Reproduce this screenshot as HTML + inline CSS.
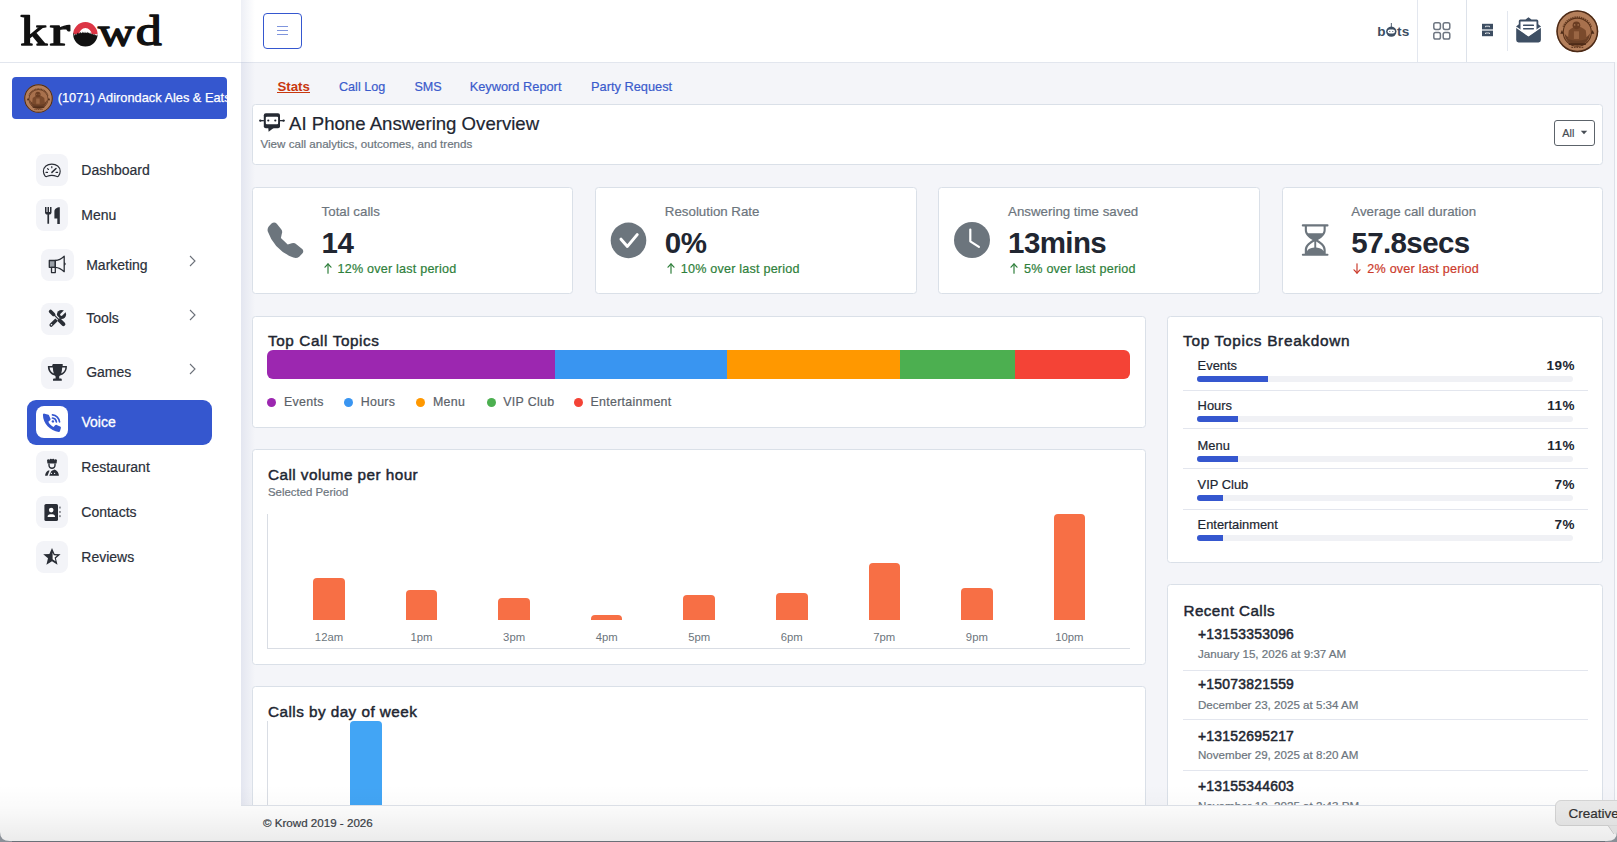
<!DOCTYPE html><html><head><meta charset="utf-8"><style>
html,body{margin:0;padding:0;width:1617px;height:842px;overflow:hidden;background:#f4f5f9;font-family:"Liberation Sans",sans-serif;}
.t{position:absolute;line-height:1;white-space:nowrap;}
svg{display:block}
</style></head><body>
<div style="position:absolute;left:241px;top:0px;width:1376px;height:842px;background:#f4f5f9"></div>
<div style="position:absolute;left:241px;top:0px;width:1376px;height:62px;background:#fff"></div>
<div style="position:absolute;left:241px;top:62px;width:1376px;height:1px;background:#e2e6ee"></div>
<div style="position:absolute;left:241px;top:0px;width:14px;height:842px;background:linear-gradient(to right, rgba(60,80,150,0.09), rgba(60,80,150,0))"></div>
<div style="position:absolute;left:263px;top:13px;width:39px;height:36px;border:1px solid #3557cf;border-radius:4px;box-sizing:border-box"></div>
<div style="position:absolute;left:277px;top:26px;width:11px;height:1.3px;background:#7f95dd"></div>
<div style="position:absolute;left:277px;top:30px;width:11px;height:1.3px;background:#7f95dd"></div>
<div style="position:absolute;left:277px;top:34px;width:11px;height:1.3px;background:#7f95dd"></div>
<svg style="position:absolute;left:1370px;top:15px" width="45" height="30" viewBox="1370 15 45 30">
<g fill="#3d4e62" font-family="Liberation Sans" font-weight="700">
<text x="1377.3" y="36.2" font-size="13.6">b</text>
<text x="1397" y="36.2" font-size="13.6" letter-spacing="0.2">ts</text>
<circle cx="1391.3" cy="31.6" r="5.2"/>
<rect x="1390.85" y="23" width="0.9" height="4"/>
</g>
<rect x="1387.6" y="29.4" width="7.4" height="4.2" rx="2.1" fill="#fff"/>
<circle cx="1389.8" cy="31.5" r="0.6" fill="#3d4e62"/><circle cx="1392.8" cy="31.5" r="0.6" fill="#3d4e62"/>
</svg>
<div style="position:absolute;left:1417px;top:0px;width:1px;height:62px;background:#e3e7ef"></div>
<svg style="position:absolute;left:1432px;top:21px" width="20" height="20" viewBox="0 0 20 20"><g fill="none" stroke="#6e7681" stroke-width="1.5">
<rect x="1.8" y="1.8" width="6.6" height="6.6" rx="1.8"/><rect x="11.2" y="1.8" width="6.6" height="6.6" rx="1.8"/>
<rect x="1.8" y="11.4" width="6.6" height="6.6" rx="1.8"/><rect x="11.2" y="11.4" width="6.6" height="6.6" rx="1.8"/></g></svg>
<div style="position:absolute;left:1466px;top:0px;width:1px;height:62px;background:#dde2ea"></div>
<svg style="position:absolute;left:1481px;top:23px" width="13" height="15" viewBox="0 0 13 15"><g fill="#3d4e62"><rect x="1" y="0.8" width="11" height="5.6"/><rect x="1" y="7.6" width="11" height="5.6"/></g>
<g stroke="#fff" stroke-width="0.8" fill="none"><path d="M4.5 4.2V3.2h4v1"/><path d="M4.5 11V10h4v1"/></g></svg>
<div style="position:absolute;left:1507px;top:11px;width:1px;height:40px;background:#e3e7ef"></div>
<svg style="position:absolute;left:1514px;top:16px" width="29" height="29" viewBox="0 0 29 29"><path fill="#3e4f64" d="M14.5 1.2l3 2.2h5.2a1.6 1.6 0 0 1 1.6 1.6v3.2l2.6 2.2v13.6a2.4 2.4 0 0 1-2.4 2.4H4.6a2.4 2.4 0 0 1-2.4-2.4V10.4l2.6-2.2V5a1.6 1.6 0 0 1 1.6-1.6h5.1z"/>
<path fill="#fff" d="M6.5 5.5h16v9l-8 5.5-8-5.5z"/>
<path fill="none" stroke="#fff" stroke-width="1.3" d="M2.2 11.2l12.3 8.5 12.3-8.5"/>
<g fill="#3e4f64"><rect x="9" y="8.6" width="11" height="1.4" rx="0.6"/><rect x="9" y="12" width="11" height="1.4" rx="0.6"/></g></svg>
<svg style="position:absolute;left:1556.2px;top:10.099999999999998px" width="42.6" height="42.6" viewBox="0 0 100 100">
<circle cx="50" cy="50" r="49" fill="#b47f5b"/>
<circle cx="50" cy="50" r="47.5" fill="none" stroke="#4b2a17" stroke-width="3.5"/>
<path d="M18 40 A34 34 0 0 1 82 40" fill="none" stroke="#6b4027" stroke-width="6" stroke-dasharray="3 2"/>
<circle cx="50" cy="52" r="33" fill="#a8714d" stroke="#5a3219" stroke-width="2.5"/>
<path d="M20 55 Q22 80 50 84 Q78 80 80 55 Q70 70 50 70 Q30 70 20 55z" fill="#5e3620" opacity="0.85"/>
<path d="M30 48 Q50 30 70 48 L72 68 Q50 76 28 68z" fill="#7a4a2c"/>
<circle cx="48" cy="36" r="9" fill="#6a3d22"/>
<circle cx="44" cy="35" r="1.5" fill="#c8946e"/><circle cx="52" cy="35" r="1.5" fill="#c8946e"/>
<rect x="42" y="50" width="12" height="18" fill="#9a6644"/>
<path d="M30 80 h40" stroke="#4b2a17" stroke-width="4"/>
<path d="M36 88 h28" stroke="#6b4027" stroke-width="3" stroke-dasharray="4 2"/>
<path d="M10 56 l4 -9 4 9z M82 56 l4 -9 4 9z" fill="#4b2a17"/>
</svg>
<div style="position:absolute;left:0px;top:0px;width:241px;height:842px;background:#fff"></div>
<div style="position:absolute;left:0px;top:62px;width:241px;height:1px;background:#e2e6ee"></div>
<svg style="position:absolute;left:0;top:0" width="241" height="62" viewBox="0 0 241 62">
<g font-family="Liberation Serif" font-size="43" fill="#111" stroke="#111" stroke-width="1.3" stroke-linejoin="round">
<text x="20.2" y="45.2" textLength="27" lengthAdjust="spacingAndGlyphs">k</text>
<text x="49.6" y="45.2" textLength="20.6" lengthAdjust="spacingAndGlyphs">r</text>
<text x="98" y="45.8" textLength="36.5" lengthAdjust="spacingAndGlyphs">w</text>
<text x="135.8" y="45.2" textLength="26" lengthAdjust="spacingAndGlyphs">d</text>
</g>
<path d="M73.2 34.300a12.200 12.200 0 0 1 24.400 0h-6a6.200 6.200 0 0 0-12.400 0z" fill="#dc3545"/>
<path d="M73.2 34.3L73.9 32.4 74.6 35.8 75.4 33.7 76.0 34.7 76.9 34.1 77.4 32.4 78.1 33.8 79.0 33.0 79.5 33.6 80.3 31.8 81.0 33.2 81.7 32.9 82.2 31.6 82.8 32.9 83.7 32.2 84.3 33.3 85.0 31.4 85.6 33.0 86.4 32.4 87.1 33.2 87.7 31.8 88.3 33.1 89.0 32.6 89.6 33.7 90.2 32.2 90.7 33.9 91.3 33.6 92.0 34.5 92.8 33.7 93.5 34.8 94.4 34.0 95.0 35.4 95.8 34.8 96.5 35.8 97.6 34.3A12.2 12.2 0 0 1 73.2 34.3z" fill="#111"/>
</svg>
<div style="position:absolute;left:12px;top:77px;width:215px;height:42px;background:#3557cf;border-radius:4px"></div>
<svg style="position:absolute;left:24.0px;top:84.0px" width="29.0" height="29.0" viewBox="0 0 100 100">
<circle cx="50" cy="50" r="49" fill="#b47f5b"/>
<circle cx="50" cy="50" r="47.5" fill="none" stroke="#4b2a17" stroke-width="3.5"/>
<path d="M18 40 A34 34 0 0 1 82 40" fill="none" stroke="#6b4027" stroke-width="6" stroke-dasharray="3 2"/>
<circle cx="50" cy="52" r="33" fill="#a8714d" stroke="#5a3219" stroke-width="2.5"/>
<path d="M20 55 Q22 80 50 84 Q78 80 80 55 Q70 70 50 70 Q30 70 20 55z" fill="#5e3620" opacity="0.85"/>
<path d="M30 48 Q50 30 70 48 L72 68 Q50 76 28 68z" fill="#7a4a2c"/>
<circle cx="48" cy="36" r="9" fill="#6a3d22"/>
<circle cx="44" cy="35" r="1.5" fill="#c8946e"/><circle cx="52" cy="35" r="1.5" fill="#c8946e"/>
<rect x="42" y="50" width="12" height="18" fill="#9a6644"/>
<path d="M30 80 h40" stroke="#4b2a17" stroke-width="4"/>
<path d="M36 88 h28" stroke="#6b4027" stroke-width="3" stroke-dasharray="4 2"/>
<path d="M10 56 l4 -9 4 9z M82 56 l4 -9 4 9z" fill="#4b2a17"/>
</svg>
<div style="position:absolute;left:12px;top:77px;width:215px;height:42px;overflow:hidden">
<div class="t" style="left:45.70px;top:14.66px;font-size:12.8px;font-weight:400;color:#fff;-webkit-text-stroke:0.25px #fff;">(1071) Adirondack Ales &amp; Eats</div>
</div>
<div style="position:absolute;left:36px;top:154px;width:32px;height:32px;background:#f3f4f8;border-radius:8px"></div>
<svg style="position:absolute;left:36px;top:154px" width="32" height="32" viewBox="0 0 32 32"><g fill="none" stroke="#2a2e36" stroke-width="1.15" stroke-linecap="round">
<path d="M9 21.8C7.9 20.4 7.4 18.8 7.4 17.2C7.4 12.8 11.2 10.1 15.8 10.1S24.2 12.8 24.2 17.2C24.2 18.8 23.7 20.4 22.6 21.8C22 22.6 21.1 22.7 20.3 22.3C18.9 21.6 17.4 21.3 15.8 21.3S12.7 21.6 11.3 22.3C10.5 22.7 9.6 22.6 9 21.8z"/>
<path d="M10 18.4h1.5M20.1 18.4h1.5M11.5 14.6l1 .9M15.8 12.6v1.1"/>
<path d="M15.9 18.4l4.1-3.9" stroke-width="1.5"/></g></svg>
<div class="t" style="left:81.30px;top:163.35px;font-size:14px;font-weight:400;color:#2b303a;-webkit-text-stroke:0.2px #2b303a;">Dashboard</div>
<div style="position:absolute;left:36px;top:199px;width:32px;height:32px;background:#f3f4f8;border-radius:8px"></div>
<svg style="position:absolute;left:36px;top:199px" width="32" height="32" viewBox="0 0 32 32"><g fill="#2a2e36">
<path d="M9 8h1.5v5h1V8h1.5v5h1V8h1.5v5.5c0 1.2-1 2-2.4 2.1v9.1h-1.7v-9.1C10 15.5 9 14.7 9 13.5z"/>
<path d="M23.8 8.2v16.7h-2.5v-5.3h-2.9v-7.3c0-2.4 2.3-4.1 5.4-4.1z"/></g></svg>
<div class="t" style="left:81.30px;top:208.35px;font-size:14px;font-weight:400;color:#2b303a;-webkit-text-stroke:0.2px #2b303a;">Menu</div>
<div style="position:absolute;left:41px;top:248.5px;width:33px;height:32.5px;background:#f3f4f8;border-radius:8px"></div>
<svg style="position:absolute;left:41px;top:249px" width="33" height="32" viewBox="0 0 33 32"><g stroke="#2a2e36" stroke-width="1.3" stroke-linejoin="round">
<rect x="8.3" y="11.5" width="6" height="6.8" fill="#9aa0a8"/>
<rect x="10.5" y="18.3" width="3.8" height="5.3" fill="none"/>
<path d="M14.3 11.5c3.3-.2 6-1.5 8.9-4.3v15.5c-2.9-2.8-5.6-4.1-8.9-4.3z" fill="none"/></g>
<path d="M23.2 13.3c.9.3 1.5.9 1.5 1.6s-.6 1.3-1.5 1.6z" fill="#2a2e36"/></svg>
<div class="t" style="left:86.20px;top:257.85px;font-size:14px;font-weight:400;color:#2b303a;-webkit-text-stroke:0.2px #2b303a;">Marketing</div>
<div style="position:absolute;left:41px;top:303px;width:33px;height:32px;background:#f3f4f8;border-radius:8px"></div>
<svg style="position:absolute;left:41px;top:303px" width="33" height="32" viewBox="0 0 33 32"><g stroke-linecap="round">
<path d="M10.2 22.1L18.6 13.7" stroke="#2a2e36" stroke-width="3.5"/>
<circle cx="20.5" cy="11.5" r="4.6" fill="#2a2e36"/>
<path d="M20.4 11.6L25.2 6.8" stroke="#f3f4f8" stroke-width="2.6"/>
<circle cx="10.5" cy="21.8" r="0.8" fill="#f3f4f8"/>
<path d="M13.2 12L17.6 16.4" stroke="#f3f4f8" stroke-width="3.2"/>
<path d="M9.6 8.4L12.6 11.4" stroke="#2a2e36" stroke-width="3.6"/>
<path d="M12.6 11.4L17.8 16.6" stroke="#2a2e36" stroke-width="1.3" stroke-linecap="butt"/>
<path d="M18.6 17.4L22.4 21.2" stroke="#2a2e36" stroke-width="4"/>
</g></svg>
<div class="t" style="left:86.20px;top:311.35px;font-size:14px;font-weight:400;color:#2b303a;-webkit-text-stroke:0.2px #2b303a;">Tools</div>
<div style="position:absolute;left:41px;top:357px;width:33px;height:32px;background:#f3f4f8;border-radius:8px"></div>
<svg style="position:absolute;left:41px;top:357px" width="33" height="32" viewBox="0 0 33 32"><g fill="#2a2e36">
<path d="M11.8 7.1h9.9v1.8h4.2v1.1c0 4.3-3 7.6-6.8 8.6-.5.2-.9.6-.9 1.1v1.9h1.3c.8 0 1.3.5 1.3 1.2v.9h-8.8v-.9c0-.7.5-1.2 1.3-1.2h1.3v-1.9c0-.5-.4-.9-.9-1.1-3.8-1-6.8-4.3-6.8-8.6V8.9h4.2z"/></g>
<path d="M8.6 10.5c.2 2.7 1.9 5 4.2 6.1-.5-1.8-.9-3.9-1-6.1z M24.4 10.5c-.2 2.7-1.9 5-4.2 6.1.5-1.8.9-3.9 1-6.1z" fill="#f3f4f8"/></svg>
<div class="t" style="left:86.20px;top:365.35px;font-size:14px;font-weight:400;color:#2b303a;-webkit-text-stroke:0.2px #2b303a;">Games</div>
<svg style="position:absolute;left:187px;top:254px" width="10" height="14" viewBox="0 0 10 14"><path d="M3 2l5 5-5 5" fill="none" stroke="#6b7079" stroke-width="1.1"/></svg>
<svg style="position:absolute;left:187px;top:308px" width="10" height="14" viewBox="0 0 10 14"><path d="M3 2l5 5-5 5" fill="none" stroke="#6b7079" stroke-width="1.1"/></svg>
<svg style="position:absolute;left:187px;top:362px" width="10" height="14" viewBox="0 0 10 14"><path d="M3 2l5 5-5 5" fill="none" stroke="#6b7079" stroke-width="1.1"/></svg>
<div style="position:absolute;left:27px;top:400px;width:185px;height:45px;background:#3557cf;border-radius:9px"></div>
<div style="position:absolute;left:36px;top:406px;width:32px;height:32px;background:#fff;border-radius:8px"></div>
<svg style="position:absolute;left:36px;top:406px" width="32" height="32" viewBox="0 0 32 32"><g fill="#3557cf">
<g transform="translate(0.6,0.7) scale(0.93)"><path d="M11.6 8.4c.7-.2 1.4.1 1.7.8l1.6 3.7c.3.6.1 1.3-.4 1.7l-1.9 1.6c1.2 2.5 3.2 4.5 5.7 5.7l1.6-1.9c.4-.5 1.1-.7 1.7-.4l3.7 1.6c.7.3 1 1 .8 1.7l-.9 3.2c-.2.6-.7 1-1.3 1C14.600 25.900 6.8 18.1 6.8 8.6c0-.6.4-1.1 1-1.3z"/></g>
<circle cx="16.9" cy="15.4" r="1.2"/></g>
<g fill="none" stroke="#3557cf" stroke-width="1.7" stroke-linecap="round">
<path d="M16.5 12c2 .2 3.6 1.8 3.9 3.8"/><path d="M16.5 8.9c3.7.2 6.7 3.2 7 6.9"/></g></svg>
<div class="t" style="left:81.50px;top:414.95px;font-size:14px;font-weight:400;color:#fff;-webkit-text-stroke:0.3px #fff;">Voice</div>
<div style="position:absolute;left:36px;top:451px;width:32px;height:32px;background:#f3f4f8;border-radius:8px"></div>
<svg style="position:absolute;left:36px;top:451px" width="32" height="32" viewBox="0 0 32 32"><g fill="#2a2e36">
<rect x="11.3" y="9.2" width="9.4" height="3.3" rx="0.4"/><circle cx="12.4" cy="9.4" r="1.25"/><circle cx="14.8" cy="9.1" r="1.25"/><circle cx="17.2" cy="9.1" r="1.25"/><circle cx="19.6" cy="9.4" r="1.25"/>
<path d="M12.3 12.5h1.4v1.7c0 1.3 1 2.3 2.3 2.3s2.3-1 2.3-2.3v-1.7h1.4v1.7c0 2.1-1.7 3.7-3.7 3.7s-3.7-1.6-3.7-3.7z"/>
<path d="M9.1 24.8c0-2.3 1.2-4.4 3-5.4l1.5.1-2.1 5.3z"/>
<path d="M13.2 24.8l2-4.6c.6-.6 1.2-.9 2-1l1-.7 1.4.4c1.9 1 3.3 3.100 3.3 5.900z"/></g>
<circle cx="15.4" cy="22.4" r="0.6" fill="#f3f4f8"/><circle cx="18.6" cy="22.4" r="0.6" fill="#f3f4f8"/></svg>
<div class="t" style="left:81.30px;top:460.35px;font-size:14px;font-weight:400;color:#2b303a;-webkit-text-stroke:0.2px #2b303a;">Restaurant</div>
<div style="position:absolute;left:36px;top:496px;width:32px;height:32px;background:#f3f4f8;border-radius:8px"></div>
<svg style="position:absolute;left:36px;top:496px" width="32" height="32" viewBox="0 0 32 32"><rect x="8.4" y="8" width="13.6" height="17.1" rx="1.6" fill="#2a2e36"/>
<g fill="#8d9096"><rect x="23" y="10.6" width="1.9" height="1.9"/><rect x="23" y="15" width="1.9" height="1.9"/><rect x="23" y="19.2" width="1.9" height="1.9"/></g>
<circle cx="15.2" cy="14.1" r="2.3" fill="#fff"/><path d="M11.6 20.9c0-1.6 1-2.6 2.6-2.6h2.2c1.6 0 2.6 1 2.6 2.600z" fill="#fff"/></svg>
<div class="t" style="left:81.30px;top:505.35px;font-size:14px;font-weight:400;color:#2b303a;-webkit-text-stroke:0.2px #2b303a;">Contacts</div>
<div style="position:absolute;left:36px;top:541px;width:32px;height:32px;background:#f3f4f8;border-radius:8px"></div>
<svg style="position:absolute;left:36px;top:541px" width="32" height="32" viewBox="0 0 32 32"><path d="M16 7l2.6 6 6 .2-4.7 4 1.6 6.600-5.500-3.600-5.600 3.600 1.600-6.600-4.800-4 6.200-.200z" fill="#2a2e36"/>
<path d="M16.600 11.600l1.200 2.700 3.300.100-2.500 2.100.900 3.700-2.900-1.900z" fill="#fff"/></svg>
<div class="t" style="left:81.30px;top:550.35px;font-size:14px;font-weight:400;color:#2b303a;-webkit-text-stroke:0.2px #2b303a;">Reviews</div>
<div class="t" style="left:277.40px;top:79.54px;font-size:13.3px;font-weight:700;color:#c8380f;">Stats</div>
<div style="position:absolute;left:277.4px;top:92px;width:32.2px;height:1.2px;background:#c8380f"></div>
<div class="t" style="left:339.00px;top:81.13px;font-size:12.6px;font-weight:400;color:#3a5bcc;-webkit-text-stroke:0.2px #3a5bcc;">Call Log</div>
<div class="t" style="left:414.40px;top:81.13px;font-size:12.6px;font-weight:400;color:#3a5bcc;-webkit-text-stroke:0.2px #3a5bcc;">SMS</div>
<div class="t" style="left:469.70px;top:80.96px;font-size:12.8px;font-weight:400;color:#3a5bcc;-webkit-text-stroke:0.2px #3a5bcc;">Keyword Report</div>
<div class="t" style="left:591.00px;top:80.96px;font-size:12.8px;font-weight:400;color:#3a5bcc;-webkit-text-stroke:0.2px #3a5bcc;">Party Request</div>
<div style="position:absolute;left:252px;top:104px;width:1351px;height:61px;background:#fff;border:1px solid #dae0e8;border-radius:3.5px;box-sizing:border-box;"></div>
<svg style="position:absolute;left:258px;top:110px" width="28" height="24" viewBox="0 0 28 24"><g fill="#252a33">
<rect x="5.8" y="3.3" width="16.2" height="15" rx="2"/>
<path d="M10.3 18h5.3l-5 3.8z"/>
<rect x="2" y="10" width="3.9" height="1.3"/><rect x="21.9" y="10" width="3.9" height="1.3"/>
<circle cx="2.3" cy="10.6" r="1.2"/><circle cx="25.6" cy="10.6" r="1.2"/></g>
<rect x="7.8" y="6.8" width="12.3" height="7.5" rx="1" fill="#fff"/>
<circle cx="10.3" cy="10.5" r="1.1" fill="#252a33"/><circle cx="17.3" cy="10.5" r="1.1" fill="#252a33"/></svg>
<div class="t" style="left:289.00px;top:114.76px;font-size:18.6px;font-weight:400;color:#212631;-webkit-text-stroke:0.2px #212631;">AI Phone Answering Overview</div>
<div class="t" style="left:260.50px;top:137.98px;font-size:11.6px;font-weight:400;color:#6c757d;-webkit-text-stroke:0.2px #6c757d;">View call analytics, outcomes, and trends</div>
<div style="position:absolute;left:1554px;top:120px;width:41px;height:26px;border:1px solid #5c636a;border-radius:3px;box-sizing:border-box"></div>
<div class="t" style="left:1562.30px;top:128.46px;font-size:10.8px;font-weight:400;color:#474d54;-webkit-text-stroke:0.2px #474d54;">All</div>
<svg style="position:absolute;left:1580px;top:130px" width="8" height="5" viewBox="0 0 8 5"><path d="M0.8 0.8h6.4L4 4.2z" fill="#474d54"/></svg>
<div style="position:absolute;left:252px;top:187px;width:321px;height:107px;background:#fff;border:1px solid #dae0e8;border-radius:3.5px;box-sizing:border-box;"></div>
<div style="position:absolute;left:595px;top:187px;width:322px;height:107px;background:#fff;border:1px solid #dae0e8;border-radius:3.5px;box-sizing:border-box;"></div>
<div style="position:absolute;left:938px;top:187px;width:322px;height:107px;background:#fff;border:1px solid #dae0e8;border-radius:3.5px;box-sizing:border-box;"></div>
<div style="position:absolute;left:1282px;top:187px;width:321px;height:107px;background:#fff;border:1px solid #dae0e8;border-radius:3.5px;box-sizing:border-box;"></div>
<svg style="position:absolute;left:262px;top:216px" width="48" height="46" viewBox="0 0 48 46"><path fill="#6c757d" d="M9.5 7.6Q12.3 5.2 14.8 7.8L19.2 13.2Q20.8 15.3 19.8 17.8L18.9 21.9L25.7 28.4L29.8 27.3Q32.4 26.6 34.6 28.4L40.2 32.9Q42.3 35 40.3 37.5L37.2 40.7Q34.6 42.8 31.4 41.6Q12.500 34.500 5.800 15.600Q5 12.300 6.900 10.200Z"/></svg>
<svg style="position:absolute;left:610px;top:222px" width="37" height="37" viewBox="0 0 37 37"><circle cx="18.5" cy="18.4" r="17.8" fill="#6c757d"/><path d="M11 17.2l6.400 7.200 9.800-11.800" fill="none" stroke="#fff" stroke-width="3" stroke-linecap="round" stroke-linejoin="round"/></svg>
<svg style="position:absolute;left:953px;top:221px" width="38" height="38" viewBox="0 0 38 38"><circle cx="19" cy="19" r="18" fill="#6c757d"/><path d="M17.3 8.6v11.7l8.600 5.600" fill="none" stroke="#fff" stroke-width="2.2" stroke-linecap="round" stroke-linejoin="round"/></svg>
<svg style="position:absolute;left:1300px;top:223px" width="31" height="34" viewBox="0 0 31 34"><g fill="#6c757d">
<rect x="1.8" y="1.3" width="26.7" height="2.1" rx="1"/><rect x="1.8" y="30.7" width="26.7" height="2.1" rx="1"/>
<path d="M4.800 2.500h2.100v4.400c0 1.400.5 2.400 1.200 3.400h14.300c.7-1 1.200-2 1.200-3.400V2.500h2.100v4.400c0 4.300-3.100 7.300-7.800 10.100 4.700 2.800 7.800 5.800 7.800 10.100v5h-20.900v-5c0-4.300 3.100-7.300 7.800-10.100-4.700-2.800-7.800-5.800-7.800-10.100z"/></g>
<path d="M7 30.700v-3.600c0-3.500 2.700-6 7.300-8.700v6.200c-3.900.2-6.500 1.700-7.300 3.600z M23.500 30.700v-3.600c0-3.500-2.700-6-7.300-8.700v6.200c3.900.2 6.500 1.700 7.300 3.600z" fill="#fff"/></svg>
<div class="t" style="left:321.60px;top:205.24px;font-size:13.3px;font-weight:400;color:#6c757d;-webkit-text-stroke:0.2px #6c757d;">Total calls</div>
<div class="t" style="left:321.60px;top:228.43px;font-size:29.5px;font-weight:700;color:#212631;letter-spacing:-0.6px;">14</div>
<svg style="position:absolute;left:323.5px;top:263px" width="8" height="11" viewBox="0 0 8 11"><g fill="none" stroke="#2f7f3b" stroke-width="1.2" stroke-linecap="round"><path d="M4 10.2V1"/><path d="M1 4.2l3-3.2 3 3.2"/></g></svg>
<div class="t" style="left:337.60px;top:263.13px;font-size:12.6px;font-weight:400;color:#2f7f3b;-webkit-text-stroke:0.2px #2f7f3b;letter-spacing:0.2px;">12% over last period</div>
<div class="t" style="left:664.85px;top:205.24px;font-size:13.3px;font-weight:400;color:#6c757d;-webkit-text-stroke:0.2px #6c757d;">Resolution Rate</div>
<div class="t" style="left:664.85px;top:228.43px;font-size:29.5px;font-weight:700;color:#212631;letter-spacing:-0.6px;">0%</div>
<svg style="position:absolute;left:666.75px;top:263px" width="8" height="11" viewBox="0 0 8 11"><g fill="none" stroke="#2f7f3b" stroke-width="1.2" stroke-linecap="round"><path d="M4 10.2V1"/><path d="M1 4.2l3-3.2 3 3.2"/></g></svg>
<div class="t" style="left:680.85px;top:263.13px;font-size:12.6px;font-weight:400;color:#2f7f3b;-webkit-text-stroke:0.2px #2f7f3b;letter-spacing:0.2px;">10% over last period</div>
<div class="t" style="left:1008.10px;top:205.24px;font-size:13.3px;font-weight:400;color:#6c757d;-webkit-text-stroke:0.2px #6c757d;">Answering time saved</div>
<div class="t" style="left:1008.10px;top:228.43px;font-size:29.5px;font-weight:700;color:#212631;letter-spacing:-0.6px;">13mins</div>
<svg style="position:absolute;left:1010.0px;top:263px" width="8" height="11" viewBox="0 0 8 11"><g fill="none" stroke="#2f7f3b" stroke-width="1.2" stroke-linecap="round"><path d="M4 10.2V1"/><path d="M1 4.2l3-3.2 3 3.2"/></g></svg>
<div class="t" style="left:1024.10px;top:263.13px;font-size:12.6px;font-weight:400;color:#2f7f3b;-webkit-text-stroke:0.2px #2f7f3b;letter-spacing:0.2px;">5% over last period</div>
<div class="t" style="left:1351.35px;top:205.24px;font-size:13.3px;font-weight:400;color:#6c757d;-webkit-text-stroke:0.2px #6c757d;">Average call duration</div>
<div class="t" style="left:1351.35px;top:228.43px;font-size:29.5px;font-weight:700;color:#212631;letter-spacing:-0.6px;">57.8secs</div>
<svg style="position:absolute;left:1353.25px;top:263px" width="8" height="11" viewBox="0 0 8 11"><g fill="none" stroke="#cc3b2c" stroke-width="1.2" stroke-linecap="round"><path d="M4 0.8v9.2"/><path d="M1 6.8l3 3.2 3-3.2"/></g></svg>
<div class="t" style="left:1367.35px;top:263.13px;font-size:12.6px;font-weight:400;color:#cc3b2c;-webkit-text-stroke:0.2px #cc3b2c;letter-spacing:0.2px;">2% over last period</div>
<div style="position:absolute;left:252px;top:316px;width:894px;height:112px;background:#fff;border:1px solid #dae0e8;border-radius:3.5px;box-sizing:border-box;"></div>
<div class="t" style="left:268.00px;top:333.15px;font-size:15.3px;font-weight:400;color:#212631;-webkit-text-stroke:0.45px #212631;letter-spacing:0.6px;">Top Call Topics</div>
<div style="position:absolute;left:267px;top:350px;width:863px;height:29px;border-radius:6px;overflow:hidden">
<div style="position:absolute;left:0px;top:0;width:288px;height:29px;background:#9c27b0"></div>
<div style="position:absolute;left:288px;top:0;width:172px;height:29px;background:#3995f1"></div>
<div style="position:absolute;left:460px;top:0;width:173px;height:29px;background:#ff9800"></div>
<div style="position:absolute;left:633px;top:0;width:115px;height:29px;background:#4caf50"></div>
<div style="position:absolute;left:748px;top:0;width:115px;height:29px;background:#f44336"></div>
</div>
<div style="position:absolute;left:266.79999999999995px;top:397.7px;width:9.2px;height:9.2px;background:#9c27b0;border-radius:50%"></div>
<div class="t" style="left:284.00px;top:396.30px;font-size:12.4px;font-weight:400;color:#5b6269;-webkit-text-stroke:0.2px #5b6269;letter-spacing:0.3px;">Events</div>
<div style="position:absolute;left:344.0px;top:397.7px;width:9.2px;height:9.2px;background:#3995f1;border-radius:50%"></div>
<div class="t" style="left:360.70px;top:396.30px;font-size:12.4px;font-weight:400;color:#5b6269;-webkit-text-stroke:0.2px #5b6269;letter-spacing:0.3px;">Hours</div>
<div style="position:absolute;left:415.79999999999995px;top:397.7px;width:9.2px;height:9.2px;background:#ff9800;border-radius:50%"></div>
<div class="t" style="left:433.00px;top:396.30px;font-size:12.4px;font-weight:400;color:#5b6269;-webkit-text-stroke:0.2px #5b6269;letter-spacing:0.3px;">Menu</div>
<div style="position:absolute;left:486.59999999999997px;top:397.7px;width:9.2px;height:9.2px;background:#4caf50;border-radius:50%"></div>
<div class="t" style="left:503.30px;top:396.30px;font-size:12.4px;font-weight:400;color:#5b6269;-webkit-text-stroke:0.2px #5b6269;letter-spacing:0.3px;">VIP Club</div>
<div style="position:absolute;left:573.8px;top:397.7px;width:9.2px;height:9.2px;background:#f44336;border-radius:50%"></div>
<div class="t" style="left:590.50px;top:396.30px;font-size:12.4px;font-weight:400;color:#5b6269;-webkit-text-stroke:0.2px #5b6269;letter-spacing:0.3px;">Entertainment</div>
<div style="position:absolute;left:252px;top:449px;width:894px;height:216px;background:#fff;border:1px solid #dae0e8;border-radius:3.5px;box-sizing:border-box;"></div>
<div class="t" style="left:268.00px;top:467.45px;font-size:15.3px;font-weight:400;color:#212631;-webkit-text-stroke:0.45px #212631;letter-spacing:0.45px;">Call volume per hour</div>
<div class="t" style="left:268.00px;top:487.15px;font-size:11.4px;font-weight:400;color:#6c757d;-webkit-text-stroke:0.2px #6c757d;">Selected Period</div>
<div style="position:absolute;left:267px;top:514px;width:1px;height:135px;background:#d9dde4"></div>
<div style="position:absolute;left:267px;top:648px;width:863px;height:1px;background:#d9dde4"></div>
<div style="position:absolute;left:313.20px;top:578px;width:31.6px;height:42.0px;background:#f76f45;border-radius:4px 4px 0 0"></div>
<div class="t" style="left:289.00px;width:80px;text-align:center;top:631.93px;font-size:11.3px;color:#6c757d">12am</div>
<div style="position:absolute;left:405.75px;top:590px;width:31.6px;height:30.0px;background:#f76f45;border-radius:4px 4px 0 0"></div>
<div class="t" style="left:381.55px;width:80px;text-align:center;top:631.93px;font-size:11.3px;color:#6c757d">1pm</div>
<div style="position:absolute;left:498.30px;top:598.2px;width:31.6px;height:21.8px;background:#f76f45;border-radius:4px 4px 0 0"></div>
<div class="t" style="left:474.10px;width:80px;text-align:center;top:631.93px;font-size:11.3px;color:#6c757d">3pm</div>
<div style="position:absolute;left:590.85px;top:614.7px;width:31.6px;height:5.3px;background:#f76f45;border-radius:4px 4px 0 0"></div>
<div class="t" style="left:566.65px;width:80px;text-align:center;top:631.93px;font-size:11.3px;color:#6c757d">4pm</div>
<div style="position:absolute;left:683.40px;top:595.1px;width:31.6px;height:24.9px;background:#f76f45;border-radius:4px 4px 0 0"></div>
<div class="t" style="left:659.20px;width:80px;text-align:center;top:631.93px;font-size:11.3px;color:#6c757d">5pm</div>
<div style="position:absolute;left:775.95px;top:593px;width:31.6px;height:27.0px;background:#f76f45;border-radius:4px 4px 0 0"></div>
<div class="t" style="left:751.75px;width:80px;text-align:center;top:631.93px;font-size:11.3px;color:#6c757d">6pm</div>
<div style="position:absolute;left:868.50px;top:563.1px;width:31.6px;height:56.9px;background:#f76f45;border-radius:4px 4px 0 0"></div>
<div class="t" style="left:844.30px;width:80px;text-align:center;top:631.93px;font-size:11.3px;color:#6c757d">7pm</div>
<div style="position:absolute;left:961.05px;top:588.2px;width:31.6px;height:31.8px;background:#f76f45;border-radius:4px 4px 0 0"></div>
<div class="t" style="left:936.85px;width:80px;text-align:center;top:631.93px;font-size:11.3px;color:#6c757d">9pm</div>
<div style="position:absolute;left:1053.60px;top:514.1px;width:31.6px;height:105.9px;background:#f76f45;border-radius:4px 4px 0 0"></div>
<div class="t" style="left:1029.40px;width:80px;text-align:center;top:631.93px;font-size:11.3px;color:#6c757d">10pm</div>
<div style="position:absolute;left:252px;top:686px;width:894px;height:200px;background:#fff;border:1px solid #dae0e8;border-radius:3.5px;box-sizing:border-box;"></div>
<div class="t" style="left:268.00px;top:704.05px;font-size:15.3px;font-weight:400;color:#212631;-webkit-text-stroke:0.45px #212631;letter-spacing:0.45px;">Calls by day of week</div>
<div style="position:absolute;left:267px;top:721px;width:1px;height:120px;background:#d9dde4"></div>
<div style="position:absolute;left:350px;top:721px;width:32px;height:120px;background:#42a5f5;border-radius:4px 4px 0 0"></div>
<div style="position:absolute;left:1167px;top:316px;width:436px;height:247px;background:#fff;border:1px solid #dae0e8;border-radius:3.5px;box-sizing:border-box;"></div>
<div class="t" style="left:1183.10px;top:333.46px;font-size:15.4px;font-weight:400;color:#212631;-webkit-text-stroke:0.45px #212631;letter-spacing:0.67px;">Top Topics Breakdown</div>
<div class="t" style="left:1197.60px;top:359.88px;font-size:12.9px;font-weight:400;color:#212631;-webkit-text-stroke:0.2px #212631;">Events</div>
<div class="t" style="left:1475px;width:100px;text-align:right;top:358.77px;font-size:13.5px;font-weight:700;letter-spacing:0.5px;color:#212631">19%</div>
<div style="position:absolute;left:1197px;top:376.1px;width:376px;height:5.7px;background:#f0f1f5;border-radius:3px"></div>
<div style="position:absolute;left:1197px;top:376.1px;width:71px;height:5.7px;background:#3557cf;border-radius:3px 0 0 3px"></div>
<div style="position:absolute;left:1183px;top:389.5px;width:405px;height:1px;background:#e3e6ee"></div>
<div class="t" style="left:1197.60px;top:399.88px;font-size:12.9px;font-weight:400;color:#212631;-webkit-text-stroke:0.2px #212631;">Hours</div>
<div class="t" style="left:1475px;width:100px;text-align:right;top:398.77px;font-size:13.5px;font-weight:700;letter-spacing:0.5px;color:#212631">11%</div>
<div style="position:absolute;left:1197px;top:416.2px;width:376px;height:5.7px;background:#f0f1f5;border-radius:3px"></div>
<div style="position:absolute;left:1197px;top:416.2px;width:41px;height:5.7px;background:#3557cf;border-radius:3px 0 0 3px"></div>
<div style="position:absolute;left:1183px;top:428.3px;width:405px;height:1px;background:#e3e6ee"></div>
<div class="t" style="left:1197.60px;top:439.88px;font-size:12.9px;font-weight:400;color:#212631;-webkit-text-stroke:0.2px #212631;">Menu</div>
<div class="t" style="left:1475px;width:100px;text-align:right;top:438.77px;font-size:13.5px;font-weight:700;letter-spacing:0.5px;color:#212631">11%</div>
<div style="position:absolute;left:1197px;top:456.3px;width:376px;height:5.7px;background:#f0f1f5;border-radius:3px"></div>
<div style="position:absolute;left:1197px;top:456.3px;width:41px;height:5.7px;background:#3557cf;border-radius:3px 0 0 3px"></div>
<div style="position:absolute;left:1183px;top:468.4px;width:405px;height:1px;background:#e3e6ee"></div>
<div class="t" style="left:1197.60px;top:478.88px;font-size:12.9px;font-weight:400;color:#212631;-webkit-text-stroke:0.2px #212631;">VIP Club</div>
<div class="t" style="left:1475px;width:100px;text-align:right;top:477.77px;font-size:13.5px;font-weight:700;letter-spacing:0.5px;color:#212631">7%</div>
<div style="position:absolute;left:1197px;top:495.3px;width:376px;height:5.7px;background:#f0f1f5;border-radius:3px"></div>
<div style="position:absolute;left:1197px;top:495.3px;width:26px;height:5.7px;background:#3557cf;border-radius:3px 0 0 3px"></div>
<div style="position:absolute;left:1183px;top:508.6px;width:405px;height:1px;background:#e3e6ee"></div>
<div class="t" style="left:1197.60px;top:518.88px;font-size:12.9px;font-weight:400;color:#212631;-webkit-text-stroke:0.2px #212631;">Entertainment</div>
<div class="t" style="left:1475px;width:100px;text-align:right;top:517.77px;font-size:13.5px;font-weight:700;letter-spacing:0.5px;color:#212631">7%</div>
<div style="position:absolute;left:1197px;top:535px;width:376px;height:5.7px;background:#f0f1f5;border-radius:3px"></div>
<div style="position:absolute;left:1197px;top:535px;width:26px;height:5.7px;background:#3557cf;border-radius:3px 0 0 3px"></div>
<div style="position:absolute;left:1167px;top:584px;width:436px;height:300px;background:#fff;border:1px solid #dae0e8;border-radius:3.5px;box-sizing:border-box;"></div>
<div class="t" style="left:1183.50px;top:602.53px;font-size:15.2px;font-weight:400;color:#212631;-webkit-text-stroke:0.45px #212631;letter-spacing:0.45px;">Recent Calls</div>
<div class="t" style="left:1198.00px;top:627.63px;font-size:13.9px;font-weight:400;color:#212631;-webkit-text-stroke:0.5px #212631;letter-spacing:0.25px;">+13153353096</div>
<div class="t" style="left:1198.00px;top:648.18px;font-size:11.6px;font-weight:400;color:#6c757d;-webkit-text-stroke:0.2px #6c757d;">January 15, 2026 at 9:37 AM</div>
<div class="t" style="left:1198.00px;top:678.13px;font-size:13.9px;font-weight:400;color:#212631;-webkit-text-stroke:0.5px #212631;letter-spacing:0.25px;">+15073821559</div>
<div class="t" style="left:1198.00px;top:699.08px;font-size:11.6px;font-weight:400;color:#6c757d;-webkit-text-stroke:0.2px #6c757d;">December 23, 2025 at 5:34 AM</div>
<div class="t" style="left:1198.00px;top:729.53px;font-size:13.9px;font-weight:400;color:#212631;-webkit-text-stroke:0.5px #212631;letter-spacing:0.25px;">+13152695217</div>
<div class="t" style="left:1198.00px;top:749.28px;font-size:11.6px;font-weight:400;color:#6c757d;-webkit-text-stroke:0.2px #6c757d;">November 29, 2025 at 8:20 AM</div>
<div class="t" style="left:1198.00px;top:780.13px;font-size:13.9px;font-weight:400;color:#212631;-webkit-text-stroke:0.5px #212631;letter-spacing:0.25px;">+13155344603</div>
<div class="t" style="left:1198.00px;top:799.98px;font-size:11.6px;font-weight:400;color:#6c757d;-webkit-text-stroke:0.2px #6c757d;">November 19, 2025 at 2:43 PM</div>
<div style="position:absolute;left:1183px;top:669.5px;width:405px;height:1px;background:#e3e6ee"></div>
<div style="position:absolute;left:1183px;top:719.4px;width:405px;height:1px;background:#e3e6ee"></div>
<div style="position:absolute;left:1183px;top:770.3px;width:405px;height:1px;background:#e3e6ee"></div>
<div style="position:absolute;left:1614px;top:62px;width:1px;height:780px;background:#dde1e9"></div>
<div style="position:absolute;left:1615px;top:62px;width:2px;height:780px;background:#fbfbfc"></div>
<div style="position:absolute;left:241px;top:805px;width:1376px;height:37px;background:#fff;border-top:1px solid #dfe3ea;box-sizing:border-box"></div>
<div class="t" style="left:263.00px;top:817.18px;font-size:11.6px;font-weight:400;color:#3a3f47;-webkit-text-stroke:0.2px #3a3f47;">&copy; Krowd 2019 - 2026</div>
<div style="position:absolute;left:1555px;top:800px;width:80px;height:26px;background:#ececec;border:1px solid #d6d6d6;border-radius:6px;box-sizing:border-box"></div>
<svg style="position:absolute;left:1600px;top:824px" width="17" height="18" viewBox="0 0 17 18"><path d="M0 1.500L8 1.500 17 12 17 1.500z" fill="#ececec"/><path d="M8 1.500L14 10" stroke="#d0d0d0" stroke-width="1"/></svg>
<div class="t" style="left:1568.60px;top:807.07px;font-size:13.5px;font-weight:400;color:#333;-webkit-text-stroke:0.2px #333;">Creative</div>
<div style="position:absolute;left:0px;top:785px;width:1617px;height:57px;background:linear-gradient(to bottom, rgba(0,0,0,0), rgba(0,0,0,0.02) 40%, rgba(0,0,0,0.08));pointer-events:none"></div>
<div style="position:absolute;left:0px;top:841px;width:1617px;height:1px;background:#6a7078"></div>
<svg style="position:absolute;left:0px;top:832px" width="12" height="10" viewBox="0 0 12 10"><path d="M0 0 Q0 9 10 9 L12 9 L12 10 L0 10z" fill="#8a9098"/></svg>
<svg style="position:absolute;left:1605px;top:832px" width="12" height="10" viewBox="0 0 12 10"><path d="M12 0 Q12 9 2 9 L0 9 L0 10 L12 10z" fill="#8a9098"/></svg>
</body></html>
